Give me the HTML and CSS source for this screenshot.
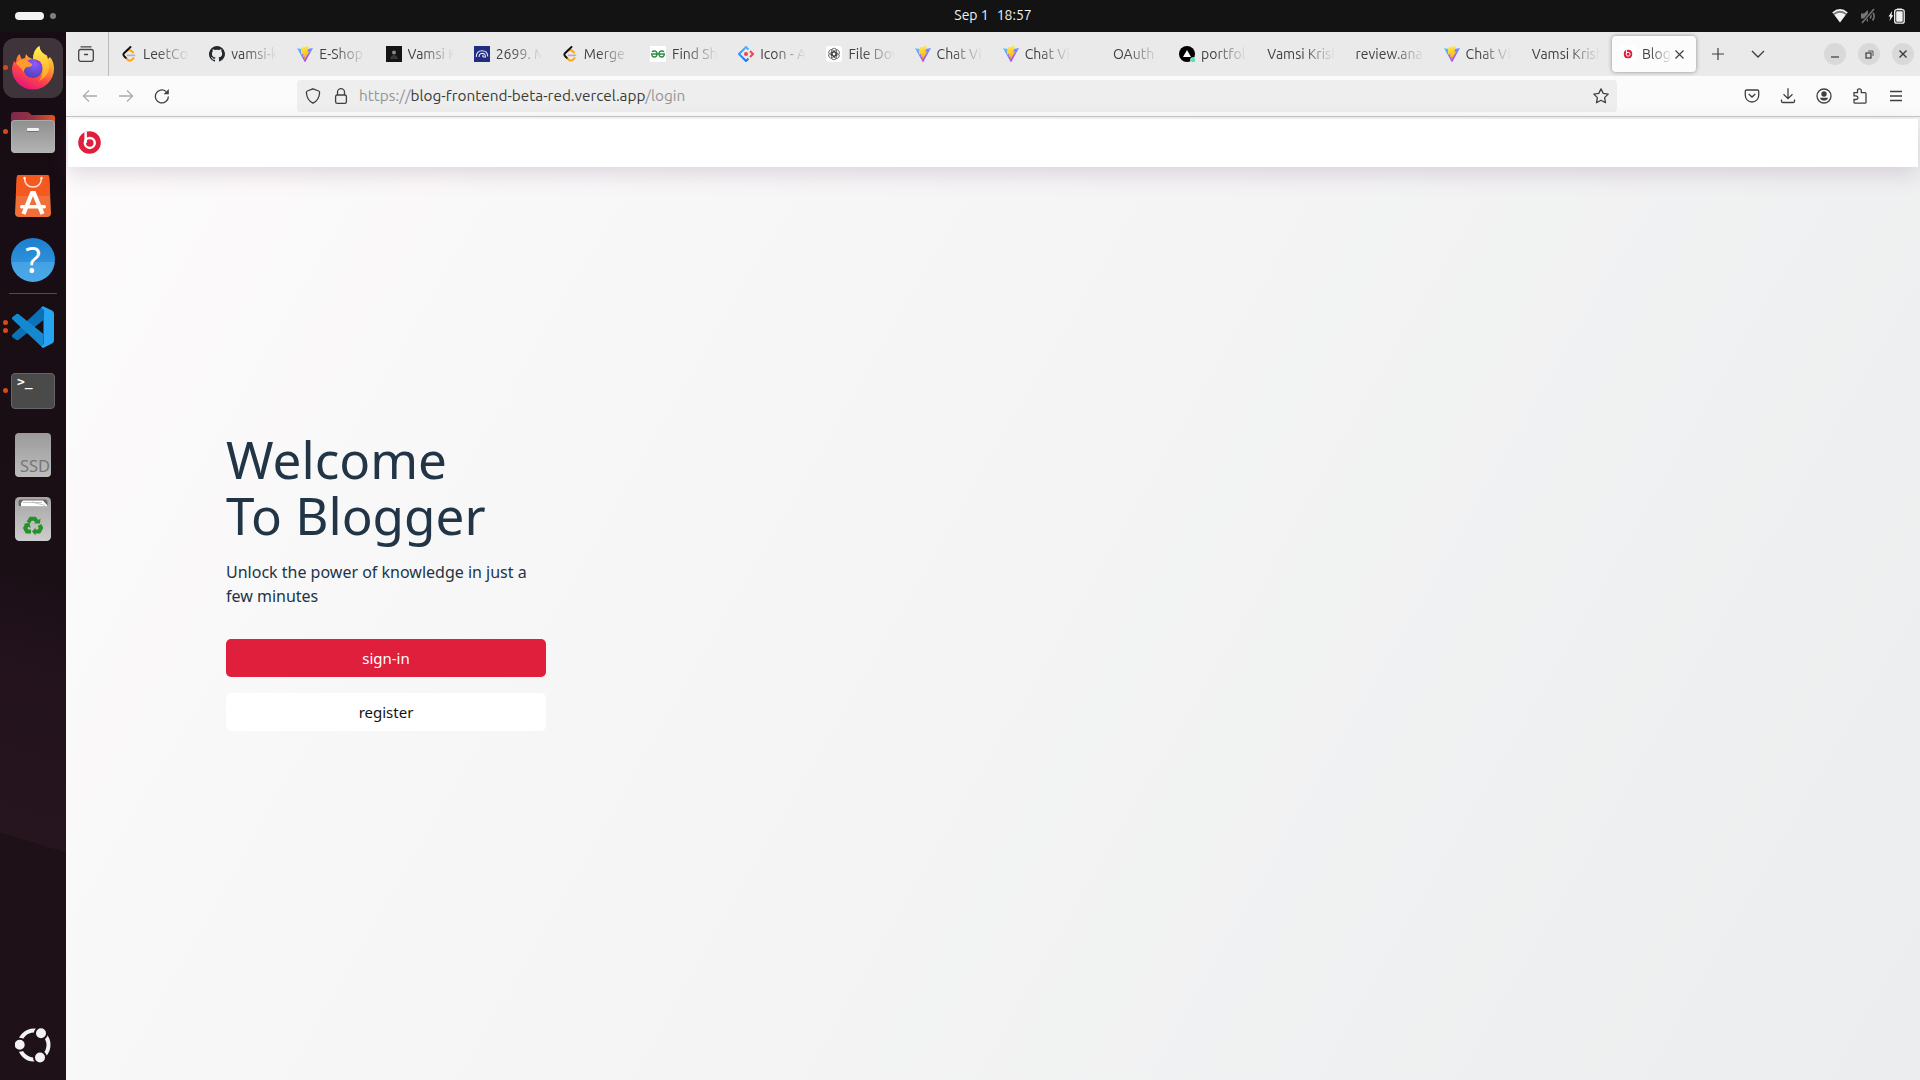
FILE: index.html
```html
<!DOCTYPE html>
<html lang="en">
<head>
<meta charset="utf-8">
<title>Blogger</title>
<link rel="stylesheet" href="styles.css">
</head>
<body>
<svg class="defs" width="0" height="0" aria-hidden="true">
  <defs>
    <linearGradient id="vg" x1="0" y1="0" x2=".6" y2="1"><stop offset="0" stop-color="#41d1ff"/><stop offset="1" stop-color="#bd34fe"/></linearGradient>
    <linearGradient id="vy" x1=".4" y1="0" x2=".6" y2="1"><stop offset="0" stop-color="#ffe84d"/><stop offset="1" stop-color="#ffa800"/></linearGradient>
    <linearGradient id="ant" x1="0" y1="0" x2="0" y2="1"><stop offset="0" stop-color="#4fb4ff"/><stop offset="1" stop-color="#1677ff"/></linearGradient>
    <symbol id="vite" viewBox="0 0 16 16"><path d="M0 2.2 8 3.6 16 2 8.4 15.8Q8 16.4 7.6 15.8Z" fill="url(#vg)"/><path d="M11.8.1 4.2 1.400 3.900 8.400 6.400 7.900 5.900 10.900 7.700 10.500 7 14.500 12.300 5.500 10.300 5.900Z" fill="url(#vy)"/></symbol>
    <symbol id="leet" viewBox="0 0 16 16"><path d="M5.500 5Q8 2.800 10.500 5L12 6.500M4.500 11.500 7 13.900Q9 15.400 11 13.700L12.500 12.200" fill="none" stroke="#ffa116" stroke-width="1.900" stroke-linecap="round"/><path d="M9.500 1 3 7.200Q1.800 8.600 3 10L4.800 11.800" fill="none" stroke="#111" stroke-width="1.900" stroke-linecap="round"/><path d="M6.500 9.300H13.500" stroke="#b3b3b3" stroke-width="1.700" stroke-linecap="round"/></symbol>
    <symbol id="beats" viewBox="0 0 24 24"><circle cx="12" cy="12" r="11.800" fill="#e01f3d"/><path d="M8 1V12.500" stroke="#fff" stroke-width="2.600"/><circle cx="12.300" cy="12.500" r="5.200" fill="none" stroke="#fff" stroke-width="2.500"/></symbol>
  </defs>
</svg>

<header class="topbar">
  <div class="workspaces"><span class="pill"></span><span class="dot"></span></div>
  <div class="clock"><span>Sep 1</span><span>18:57</span></div>
  <div class="tray">
    <svg width="16" height="16" viewBox="0 0 16 16"><path d="M.7 5Q8-1.200 15.300 5L8 14.500Z" fill="#777"/><path d="M.7 5Q8-1.200 15.300 5" fill="none" stroke="#f2f2f2" stroke-width="1.500"/><path d="M2.300 6.800Q8 2.500 13.700 6.800L8 14.500Z" fill="#f2f2f2"/></svg>
    <svg width="16" height="16" viewBox="0 0 16 16" fill="none" stroke="#777" stroke-width="1.500"><path d="M1 5.500H4L8 2V14L4 10.500H1Z" fill="#777" stroke="none"/><path d="M10 5.500Q12 8 10 10.500M12 3.500Q16 8 12.500 12.500"/><path d="M14 1 2 15" stroke="#131313" stroke-width="3"/><path d="M14 1 2 15"/></svg>
    <svg width="17" height="16" viewBox="0 0 17 16"><path d="M4.200 3 .5 8.600H2.300L1.500 13 5.300 7.300H3.500Z" fill="#f2f2f2"/><path d="M9 .5H14V2H9Z" fill="#f2f2f2"/><rect x="6.700" y="1.700" width="9.500" height="13.500" rx="2" fill="none" stroke="#f2f2f2" stroke-width="1.300"/><rect x="8.200" y="3.200" width="6.500" height="10.500" rx=".8" fill="#f2f2f2"/></svg>
  </div>
</header>

<div class="desktop">
  <nav class="dock">
    <div class="app active">
      <i class="run"></i>
      <svg width="44" height="44" viewBox="0 0 44 44">
        <defs>
          <linearGradient id="ff1" x1=".8" y1="0" x2=".3" y2="1"><stop offset="0" stop-color="#fff44f"/><stop offset=".35" stop-color="#ffa52b"/><stop offset=".65" stop-color="#ff4a45"/><stop offset="1" stop-color="#e5107f"/></linearGradient>
          <radialGradient id="ff2" cx=".6" cy=".25" r=".8"><stop offset="0" stop-color="#9059ff"/><stop offset="1" stop-color="#4a3fb5"/></radialGradient>
          <linearGradient id="ff3" x1=".5" y1="0" x2=".5" y2="1"><stop offset="0" stop-color="#fff44f"/><stop offset="1" stop-color="#ff9a26"/></linearGradient>
        </defs>
        <path d="M5 17Q5 11 8.500 8L10.500 13 14 12 15 8Q17 12 22 13L23 8Q24 3 28.300 0 29 6 34 8.500L36 9.500 37 13 39 11Q43 16 43 23A21 20.500 0 0 1 1 23Q1 20 3 15Z" fill="url(#ff1)"/>
        <path d="M22 13Q22 4 28.300 0 29 6 34 9 38 13 38 22 37 31 28 35 33 28 31 19 29 14 22 13Z" fill="url(#ff3)"/>
        <circle cx="22" cy="22.500" r="9.500" fill="url(#ff2)"/>
        <path d="M5 17Q9 12 15 14L21 18Q22 21 16 21 13 22 13 26 10 22 5 17Z" fill="#ff9b2d"/>
        <path d="M24 14Q30 14 31 20L27 17Z" fill="#8a3ce8"/>
      </svg>
    </div>
    <div class="app">
      <i class="run"></i>
      <svg width="46" height="44" viewBox="0 0 46 44">
        <defs><linearGradient id="fo"><stop offset="0" stop-color="#7b2750"/><stop offset=".5" stop-color="#99333f"/><stop offset="1" stop-color="#e95420"/></linearGradient><linearGradient id="fg" x1="0" y1="0" x2="0" y2="1"><stop offset="0" stop-color="#8e8e8e"/><stop offset="1" stop-color="#b4b4b4"/></linearGradient></defs>
        <path d="M1 15V5Q1 2 4 2H17Q19 2 20 3.500L21.500 5H42Q45 5 45 8V16Z" fill="url(#fo)"/>
        <rect x="1" y="10" width="44" height="33" rx="4" fill="url(#fg)"/><rect x="1.500" y="10.500" width="43" height="32" rx="3.500" fill="none" stroke="#b5b5b5" stroke-opacity=".7"/>
        <rect x="17" y="18" width="12" height="3" rx="1.200" fill="#f2f2f2"/><path d="M17.500 21.500H28.500" stroke="#6f6f6f"/>
      </svg>
    </div>
    <div class="app">
      <svg width="36" height="44" viewBox="0 0 36 44">
        <path d="M4 1H32Q34 1 34.200 3L36 39Q36 43 32 43H4Q0 43 0 39L1.800 3Q2 1 4 1Z" fill="#f0703a"/><path d="M4 1H32Q34 1 34.200 3L35.200 22H.8L1.800 3Q2 1 4 1Z" fill="#f45a20"/>
        <path d="M9.500 4Q10 13 18 13T26.500 4" fill="none" stroke="#ffe0d2" stroke-width="1.600"/><circle cx="9.500" cy="4" r="1.200" fill="#fff"/><circle cx="26.500" cy="4" r="1.200" fill="#fff"/>
        <path d="M8.500 40 17 19H19L27.500 40" fill="none" stroke="#fff" stroke-width="4.200"/><rect x="5" y="31" width="26" height="3.600" rx="1.800" fill="#fff"/>
      </svg>
    </div>
    <div class="app">
      <div class="help">?</div>
    </div>
    <div class="divider"></div>
    <div class="app">
      <i class="run"></i><i class="run"></i>
      <svg width="42" height="42" viewBox="0 0 42 42">
        <path d="M31 0 6 23.500 0 29V31L4.500 34Q6 34.500 7 33.500L31.500 14Z" fill="#0b72b8"/>
        <path d="M31 42 0 13V11.500L4.500 8Q6 7.500 7 8.500L31.500 28Z" fill="#1489d0"/>
        <path d="M31 .2 40 4.500Q42 5.500 42 7.500V34.500Q42 36.500 40 37.500L31 42 29 40Q31.500 40 31.500 37V5Q31.500 2 29 2Z" fill="#27a5f2"/>
      </svg>
    </div>
    <div class="app">
      <i class="run"></i>
      <div class="terminal">&gt;_</div>
    </div>
    <div class="app"><div class="ssd">SSD</div></div>
    <div class="app">
      <svg width="36" height="44" viewBox="0 0 36 44">
        <defs><linearGradient id="tr" x1="0" y1="0" x2="0" y2="1"><stop offset="0" stop-color="#a5a5a5"/><stop offset="1" stop-color="#cdcdcd"/></linearGradient></defs>
        <rect width="36" height="44" rx="4.500" fill="url(#tr)"/><rect x="3.500" y="2.500" width="29" height="7" rx="2.500" fill="#666"/><path d="M6 9.500V6L8 3.500H28L32 8V9.500Z" fill="#fff"/><path d="M8 5.500H27M17 5 30 8.500" stroke="#aaa" stroke-width=".7"/><rect x="3" y="9.500" width="30" height="2" fill="#b0b0b0"/>
        <g fill="none" stroke="#26912a" stroke-width="4"><path d="M13.300 25.500 15.700 21.700H19.800L22 24.500"/><path d="M24.500 28 26 31 24 34.500H19.500M16 34.500H12L10.200 31 12 28"/></g>
        <path d="M19 26.500 25 26.500 25.500 21.500ZM20.500 30.500V38.500L17 34.500ZM8.500 27 14.500 25.500 15.500 31Z" fill="#26912a"/>
      </svg>
    </div>
    <div class="app launcher">
      <svg width="36" height="36" viewBox="0 0 36 36">
        <circle cx="19" cy="18" r="14.500" fill="none" stroke="#f2f2f2" stroke-width="4"/>
        <g fill="#f2f2f2" stroke="#1e1117" stroke-width="2"><circle cx="4.700" cy="17.700" r="6"/><circle cx="26" cy="6.200" r="6"/><circle cx="25" cy="30.500" r="6"/></g>
      </svg>
    </div>
  </nav>

  <main class="browser">
    <div class="tabstrip">
      <div class="view-btn"><svg width="16" height="16" viewBox="0 0 16 16" fill="none" stroke="#454545" stroke-width="1.300" stroke-linecap="round"><path d="M3 .8H13"/><rect x=".7" y="3.500" width="14.600" height="11.800" rx="2"/><path d="M6.500 8.500H9.500"/></svg></div>
      <div class="tabs">
        <div class="tab"><svg class="fav"><use href="#leet"/></svg><span class="label">LeetCode</span></div>
        <div class="tab"><svg class="fav" viewBox="0 0 16 16"><path d="M8 0a8 8 0 0 0-2.530 15.590c.4.070.55-.17.55-.38v-1.490c-2.010.44-2.530-.5-2.690-.95-.09-.23-.48-.95-.82-1.140-.28-.15-.68-.52-.01-.53.63-.01 1.080.58 1.230.82.720 1.210 1.870.87 2.330.66.070-.52.280-.87.510-1.070-1.780-.2-3.640-.89-3.640-3.950 0-.87.310-1.590.820-2.150-.08-.2-.36-1.020.08-2.120 0 0 .67-.21 2.200.82a7.400 7.400 0 0 1 4 0c1.530-1.040 2.200-.82 2.200-.82.440 1.100.160 1.920.080 2.120.510.560.820 1.270.820 2.150 0 3.070-1.870 3.750-3.650 3.950.290.250.540.730.540 1.480v2.200c0 .210.150.460.550.380A8 8 0 0 0 8 0Z" fill="#24292f"/></svg><span class="label">vamsi-krish</span></div>
        <div class="tab"><svg class="fav"><use href="#vite"/></svg><span class="label">E-Shop</span></div>
        <div class="tab"><svg class="fav" viewBox="0 0 16 16"><path d="M0 0H16V16H0Z" fill="#141414"/><circle cx="8" cy="6.500" r="2" fill="#888"/><path d="M4 13Q5 9 8 9T12 13Z" fill="#383838"/></svg><span class="label">Vamsi Kris</span></div>
        <div class="tab"><svg class="fav" viewBox="0 0 16 16"><path d="M0 0H16V16H0Z" fill="#232d7f"/><path d="M2.200 11Q2.500 4.800 8 4.800 13.500 4.800 13.800 10.500M5 11Q5.300 7.300 8.500 7.300 11.500 7.500 11.500 11H9.500Q7.800 10 9.500 9" fill="none" stroke="#e4e7ff" stroke-width="1.100"/></svg><span class="label">2699. Modify</span></div>
        <div class="tab"><svg class="fav"><use href="#leet"/></svg><span class="label">Merge</span></div>
        <div class="tab"><svg class="fav" viewBox="0 0 16 16"><path d="M0 0H16V16H0Z" fill="#fff"/><path d="M1 8H15M2 6Q2.600 5 4.300 5 7 5 7 8T4.300 11Q1.800 11 1.700 8M14 6Q13.400 5 11.700 5 9 5 9 8T11.700 11Q14.200 11 14.300 8" fill="none" stroke="#2f8d46" stroke-width="1.300"/></svg><span class="label">Find Shortest</span></div>
        <div class="tab"><svg class="fav" viewBox="0 0 16 16"><path d="M10.500 3.500 8 1 1 8 8 15 10.500 12.500" fill="none" stroke="url(#ant)" stroke-width="2"/><path d="M12 5 15 8 12 11" fill="none" stroke="#f5424e" stroke-width="2"/><circle cx="8" cy="8" r="2" fill="#f5424e"/></svg><span class="label">Icon - Ant</span></div>
        <div class="tab"><svg class="fav" viewBox="0 0 16 16"><rect width="16" height="16" rx="3" fill="#fff"/><g fill="none" stroke="#333" stroke-width=".65"><rect x="5.600" y="2.200" width="5" height="7.800" rx="2.500"/><rect x="5.600" y="2.200" width="5" height="7.800" rx="2.500" transform="rotate(60 8 8)"/><rect x="5.600" y="2.200" width="5" height="7.800" rx="2.500" transform="rotate(120 8 8)"/><rect x="5.600" y="2.200" width="5" height="7.800" rx="2.500" transform="rotate(180 8 8)"/><rect x="5.600" y="2.200" width="5" height="7.800" rx="2.500" transform="rotate(240 8 8)"/><rect x="5.600" y="2.200" width="5" height="7.800" rx="2.500" transform="rotate(300 8 8)"/></g></svg><span class="label">File Down</span></div>
        <div class="tab"><svg class="fav"><use href="#vite"/></svg><span class="label">Chat Video</span></div>
        <div class="tab"><svg class="fav"><use href="#vite"/></svg><span class="label">Chat Video</span></div>
        <div class="tab"><svg class="fav"></svg><span class="label">OAuth</span></div>
        <div class="tab"><svg class="fav" viewBox="0 0 16 16"><circle cx="8" cy="8" r="8" fill="#000"/><path d="M8 4 12 11H4Z" fill="#fff"/><circle cx="14" cy="14" r="2.800" fill="#eaeaea"/><circle cx="14" cy="14" r="2.200" fill="#50e3c2"/></svg><span class="label">portfolio</span></div>
        <div class="tab"><span class="label">Vamsi Krish</span></div>
        <div class="tab"><span class="label">review.anal</span></div>
        <div class="tab"><svg class="fav"><use href="#vite"/></svg><span class="label">Chat Video</span></div>
        <div class="tab"><span class="label">Vamsi Krish</span></div>
        <div class="tab selected"><svg class="fav" viewBox="0 0 16 16"><path d="M0 0H16V16H0Z" fill="#fff"/><use href="#beats" x="3.500" y="3.500" width="9" height="9"/></svg><span class="label">Blogger</span><svg class="close" viewBox="0 0 9 9"><path d="M.5.5 8.500 8.500M8.500.5.5 8.500" stroke="#3c3c3c" stroke-width="1.100"/></svg></div>
      </div>
      <div class="strip-btn"><svg width="12" height="12" viewBox="0 0 12 12"><path d="M6 0V12M0 6H12" stroke="#404040" stroke-width="1.200"/></svg></div>
      <div class="strip-btn"><svg width="14" height="8" viewBox="0 0 14 8"><path d="M1 1 7 7 13 1" fill="none" stroke="#404040" stroke-width="1.400"/></svg></div>
      <div class="window-btns">
        <span><svg width="8" height="10" viewBox="0 0 8 10"><path d="M0 8H8" stroke="#3a3a3a" stroke-width="1.200"/></svg></span>
        <span><svg width="9" height="9" viewBox="0 0 9 9" fill="none" stroke="#3a3a3a"><rect x="1" y="3" width="5" height="5" stroke-width="1.200"/><path d="M3 1H8V6" stroke-width=".8"/></svg></span>
        <span><svg width="8" height="8" viewBox="0 0 8 8"><path d="M.5.5 7.500 7.500M7.500.5.5 7.500" stroke="#3a3a3a" stroke-width="1.400"/></svg></span>
      </div>
    </div>

    <div class="toolbar">
      <div class="tool faded"><svg width="16" height="16" viewBox="0 0 16 16"><path d="M15 8H1.500M7 2.500 1.500 8 7 13.500"/></svg></div>
      <div class="tool faded"><svg width="16" height="16" viewBox="0 0 16 16"><path d="M1 8H14.500M9 2.500 14.500 8 9 13.500"/></svg></div>
      <div class="tool"><svg width="16" height="16" viewBox="0 0 16 16"><path d="M14.400 8.500A6.500 6.500 0 1 1 12 3.400"/><path d="M14.800 1V6.200H9.600Z" fill="#404040" stroke="none"/></svg></div>
      <div class="urlbar">
        <svg width="16" height="16" viewBox="0 0 16 16"><path d="M8 .8 13.700 3Q14.700 3.300 14.600 4.500 14.300 12 8 15.200 1.700 12 1.400 4.500 1.300 3.300 2.300 3Z"/></svg>
        <svg width="16" height="16" viewBox="0 0 16 16"><rect x="2.600" y="7" width="10.800" height="8.300" rx="1.600"/><path d="M4.500 7V4.200A3.500 3.500 0 0 1 11.500 4.200V7"/></svg>
        <div class="url">https://<b>blog-frontend-beta-red.vercel.app</b>/login</div>
        <svg width="16" height="16" viewBox="0 0 16 16"><path d="M8 .9 10.200 5.400 15.200 6.100 11.600 9.600 12.500 14.700 8 12.300 3.500 14.700 4.400 9.600.8 6.100 5.800 5.400Z" stroke-linejoin="round"/></svg>
      </div>
      <div class="tool"><svg width="16" height="16" viewBox="0 0 16 16"><path d="M2.500 2H13.500Q14.700 2 14.700 3.300V7.500A6.700 6.500 0 0 1 1.300 7.500V3.300Q1.300 2 2.500 2ZM4.700 6 8 9 11.300 6"/></svg></div>
      <div class="tool"><svg width="16" height="16" viewBox="0 0 16 16"><path d="M8 .3V10.500M3.500 6.200 8 10.700 12.500 6.200M1.500 11.500V13.200Q1.500 14.500 2.800 14.500H13.200Q14.500 14.500 14.500 13.200V11.500"/></svg></div>
      <div class="tool"><svg width="16" height="16" viewBox="0 0 16 16"><circle cx="8" cy="8" r="7"/><circle cx="8" cy="6" r="2.700" fill="#404040" stroke="none"/><path d="M3.800 9.700H12.200Q11 12.600 8 12.600T3.800 9.700Z" fill="#404040" stroke="none"/></svg></div>
      <div class="tool"><svg width="16" height="16" viewBox="0 0 16 16"><path d="M2 4.700H5.500V2.800Q5.500.8 7.400.8T9.300 2.800V4.700H13Q14 4.700 14 5.700V14.200Q14 15.200 13 15.200H3Q2 15.200 2 14.200V11.500H4Q6 11.400 6 9.700T4 7.800H2Z"/></svg></div>
      <div class="tool"><svg width="16" height="16" viewBox="0 0 16 16"><path d="M2 3.500H14M2 8H14M2 12.500H14"/></svg></div>
    </div>

    <section class="page">
      <div class="site-nav"><svg width="23" height="23"><use href="#beats"/></svg></div>
      <div class="hero">
        <h1>Welcome<br>To Blogger</h1>
        <p>Unlock the power of knowledge in just a few minutes</p>
        <button class="primary">sign-in</button>
        <button class="secondary">register</button>
      </div>
    </section>
  </main>
</div>
</body>
</html>
```

FILE: styles.css
```css
* { box-sizing: border-box; }
body {
  margin: 0;
  width: 1920px;
  height: 1080px;
  overflow: hidden;
  display: flex;
  flex-direction: column;
  font-family: "Noto Sans", sans-serif;
}
svg { display: block; flex: none; }
.defs { position: absolute; }

/* system bar */
.topbar {
  height: 32px;
  flex: none;
  background: #131313;
  color: #f2f2f2;
  display: grid;
  grid-template-columns: 1fr auto 1fr;
  align-items: center;
  padding: 0 15px;
}
.workspaces { display: flex; align-items: center; gap: 6px; }
.pill { width: 29px; height: 8px; border-radius: 4px; background: #f2f2f2; }
.dot { width: 6px; height: 6px; border-radius: 50%; background: #808080; }
.clock {
  display: flex;
  gap: 8px;
  margin-left: 66px;
  padding-bottom: 2px;
  font-family: Ubuntu, "Noto Sans", sans-serif;
  font-size: 14px;
  line-height: 18px;
}
.tray { display: flex; justify-content: flex-end; gap: 12px; }

.desktop { flex: 1; display: flex; min-height: 0; }

/* dock */
.dock {
  width: 66px;
  flex: none;
  padding: 6px 3px 4px;
  display: flex;
  flex-direction: column;
  gap: 4px;
  background:
    linear-gradient(197deg, transparent 52%, rgba(41, 21, 33, .5) 60%, #26141e 76.8%, transparent 76.8%),
    linear-gradient(#170c13, #1b0f16 50%, #1e1117 80%, #1e1117);
}
.app {
  position: relative;
  height: 60px;
  flex: none;
  border-radius: 12px;
  display: flex;
  align-items: center;
  justify-content: center;
}
.app.active { background: #40343b; }
.run {
  position: absolute;
  left: 0;
  top: 27px;
  width: 5px;
  height: 5px;
  border-radius: 50%;
  background: #d94a16;
}
.run:has(+ .run) { top: 23px; }
.run + .run { top: 31px; }
.divider { height: 1px; margin: -1px 6px; background: #56494f; }
.help {
  width: 44px;
  height: 44px;
  border-radius: 50%;
  background: linear-gradient(#1c80d0, #2f90da 55%, #44a2e4 55%, #4ca9e8);
  color: #fff;
  font-size: 36px;
  line-height: 44px;
  text-align: center;
}
.terminal {
  width: 44px;
  height: 36px;
  border: 1px solid #666;
  border-radius: 4px;
  background: #4a4a4a;
  color: #fff;
  font: bold 13px/14px "DejaVu Sans Mono", monospace;
  padding: 1px 5px;
}
.ssd {
  width: 36px;
  height: 44px;
  border-radius: 4px;
  background: linear-gradient(#9b9b9b, #bdbdbd);
  color: #777;
  font-size: 16.5px;
  line-height: 20px;
  padding: 23px 0 0 5px;
}
.launcher { margin-top: auto; padding-bottom: 3px; }

/* browser chrome */
.browser { flex: 1; display: flex; flex-direction: column; min-width: 0; }
.tabstrip {
  height: 44px;
  flex: none;
  background: #eaeaea;
  display: flex;
  align-items: center;
  font-family: Ubuntu, "Noto Sans", sans-serif;
  font-size: 14px;
  color: #404040;
}
.view-btn {
  width: 43px;
  height: 44px;
  border-right: 1px solid #bcbcbc;
  padding-left: 12px;
  display: flex;
  align-items: center;
}
.tabs { display: flex; width: 1589px; padding-left: 2px; flex: none; }
.tab {
  flex: 1 1 0;
  min-width: 0;
  height: 36px;
  margin: 0 2px;
  padding: 0 8px;
  border-radius: 4px;
  display: flex;
  align-items: center;
  gap: 6px;
}
.fav { width: 16px; height: 16px; }
.label {
  flex: 1;
  min-width: 0;
  overflow: hidden;
  white-space: nowrap;
  line-height: 20px;
  padding-bottom: 1px;
  -webkit-mask-image: linear-gradient(to left, transparent, #000 32px);
  mask-image: linear-gradient(to left, transparent, #000 32px);
}
.tab.selected { background: #fcfcfc; box-shadow: 0 0 4px rgba(0, 0, 0, .4); }
.tab.selected .label {
  margin-right: -3px;
  -webkit-mask-image: linear-gradient(to left, transparent, #000 22px);
  mask-image: linear-gradient(to left, transparent, #000 22px);
}
.close { width: 9px; height: 9px; margin-right: 4px; }
.strip-btn { width: 40px; display: flex; justify-content: center; }
.window-btns { margin-left: auto; padding-right: 6px; display: flex; gap: 12px; }
.window-btns span {
  width: 22px;
  height: 22px;
  border-radius: 50%;
  background: #d9d9d9;
  display: flex;
  align-items: center;
  justify-content: center;
}
.toolbar {
  height: 41px;
  flex: none;
  background: #fbfbfb;
  border-bottom: 1px solid #c6c6c6;
  padding: 0 6px;
  display: flex;
  align-items: center;
}
.tool { width: 36px; display: flex; justify-content: center; }
.toolbar svg { fill: none; stroke: #404040; stroke-width: 1.3; }
.faded { opacity: .42; }
.urlbar {
  flex: 1;
  height: 32px;
  margin: 0 117px;
  padding: 0 8px;
  border-radius: 4px;
  background: #eee;
  display: flex;
  align-items: center;
  gap: 12px;
}
.url {
  flex: 1;
  margin-left: -2px;
  padding-bottom: 1px;
  font-family: Ubuntu, "Noto Sans", sans-serif;
  font-size: 15.35px;
  line-height: 20px;
  color: #949494;
}
.url b { font-weight: 400; color: #3a3a3a; }

/* site */
.page {
  flex: 1;
  min-height: 0;
  padding: 2px;
  background: linear-gradient(120deg, #fdfbfb 0%, #ebedee 100%);
}
.site-nav {
  height: 48px;
  background: #fff;
  padding: 0 0 1px 10px;
  display: flex;
  align-items: center;
  box-shadow: 0 7px 22px rgba(100, 60, 100, .18);
}
.hero {
  width: 320px;
  margin: 264px 0 0 158px;
  color: #213547;
  display: flex;
  flex-direction: column;
}
.hero h1 { margin: 0; font-size: 51.2px; line-height: 1.1; font-weight: 400; }
.hero p { margin: 16px 0 31px; font-size: 16px; line-height: 24px; }
.hero button {
  height: 38px;
  border: 0;
  border-radius: 5px;
  font: 15px "Noto Sans", sans-serif;
  padding: 0;
}
.primary { background: #e01f3d; color: #fff; margin-bottom: 16px; }
.secondary { background: #fff; color: #111; }
```
